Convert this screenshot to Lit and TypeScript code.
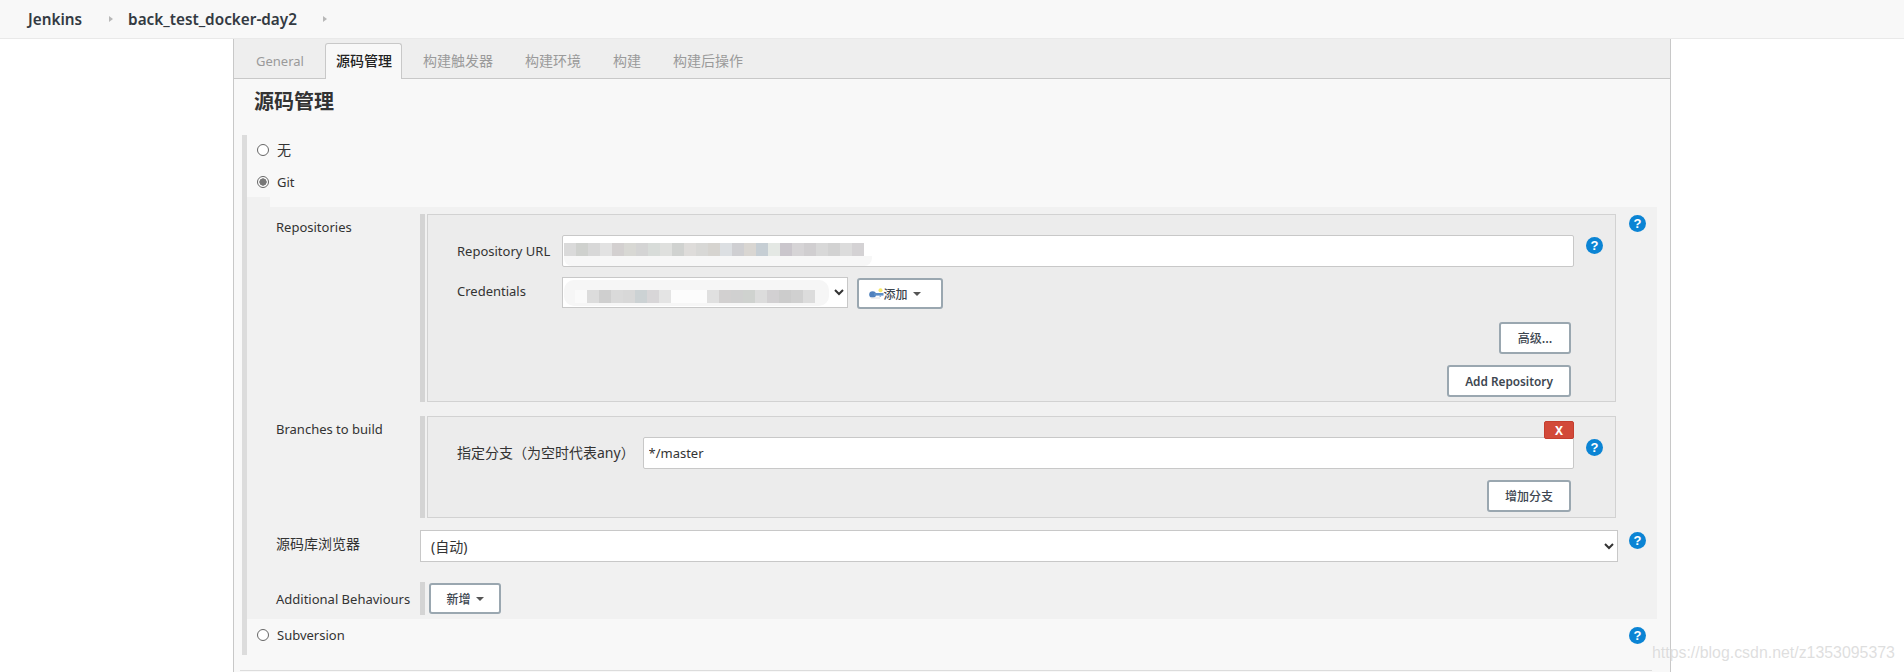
import { LitElement, html, css, svg } from "lit";
import { customElement } from "lit/decorators.js";

const URL_CELLS = ["#dadada","#cfd1ce","#d8d8d8","#e2e2e2","#d3d0d0","#d8d8d4","#d4d4d4","#d8dcd9","#dfe0de","#d0d2d0","#dedcda","#d8d8d6","#d6d4d0","#dcdfe2","#cfcfd2","#d9d6d2","#c6ced4","#e4e8e4","#cac6cc","#d6d4d6","#d0ced0","#d8d8d8","#d2d2d2","#dcdcdc","#d4d2d4"];
const CRED_CELLS = ["#fafafa","#dcdcdc","#cfcfcf","#dadada","#d8d8d8","#ccd2d4","#d8d6d8","#e4e4e4","#fcfcfc","#fcfcfc","#fcfcfc","#e0e0e0","#d2d0d0","#d0d0d0","#cfd2cf","#dcdcdc","#d2d0d2","#cccccc","#d0d0d0","#dcdcdc"];

const help = () => html`<span class="help" title="Help">?</span>`;

const keyIcon = svg`<svg class="key" width="15" height="11" viewBox="0 0 15 11" aria-hidden="true">
  <ellipse cx="3.6" cy="6.5" rx="3.4" ry="3.2" fill="#4f81bd"/>
  <rect x="5" y="5" width="9.5" height="2.6" fill="#5b8ec7"/>
  <rect x="10.5" y="7.4" width="1.6" height="1.4" fill="#7ea6d4"/>
  <rect x="2" y="9.4" width="9" height="1.2" fill="#e4e4e4"/>
  <circle cx="11.5" cy="2.2" r="2" fill="#f6e96a"/>
</svg>`;

@customElement("app-root")
export class AppRoot extends LitElement {
  static styles = css`
    :host {
      display: block;
      position: relative;
      width: 1904px;
      height: 672px;
      overflow: hidden;
      background: #fff;
      color: #333;
      font: 13px/18px "Noto Sans", "Noto Sans CJK SC", sans-serif;
    }
    * { box-sizing: border-box; }
    .bar {
      display: flex;
      align-items: center;
      height: 39px;
      padding: 0 0 1px 28px;
      background: #f8f8f8;
      border-bottom: 1px solid #e9e9e9;
      font-weight: 600;
      font-size: 15.3px;
      color: #333a42;
    }
    .crumb-arrow {
      width: 0;
      height: 0;
      border-left: 4px solid #b8b8b8;
      border-top: 3.5px solid transparent;
      border-bottom: 3.5px solid transparent;
    }
    .arrow-a { margin: 0 15px 0 27px; }
    .arrow-b { margin-left: 26px; }
    .main {
      margin-left: 233px;
      width: 1438px;
      height: 633px;
      background: #f8f8f8;
      border-left: 1px solid #c8c8c8;
      border-right: 1px solid #c8c8c8;
    }
    .tabs {
      display: flex;
      align-items: flex-end;
      height: 40px;
      padding-left: 9px;
      background: #eeeeee;
      border-bottom: 1px solid #c8c8c8;
    }
    .tab {
      height: 36px;
      margin-bottom: -1px;
      padding: 5px 12px 0;
      margin-right: 6px;
      border: 1px solid transparent;
      border-bottom: 0;
      color: #9a9a9a;
      white-space: nowrap;
      font-size: 14px;
      line-height: 24px;
    }
    .tab.active {
      background: #f8f8f8;
      border-color: #c8c8c8;
      border-radius: 3px 3px 0 0;
      color: #222;
      width: 77px;
      padding: 5px 0 0 10.5px;
      margin-right: 8.5px;
      font-weight: 500;
    }
    .tab.general { font-size: 13px; flex: none; width: 81.5px; padding-right: 0; margin-right: 0; }
    h2 {
      margin: 0;
      height: 56px;
      padding: 9px 0 0 20px;
      font-size: 20px;
      line-height: 28px;
      font-weight: 700;
      color: #333;
    }
    .scm {
      margin-left: 8px;
      width: 1415px;
      height: 520px;
      border-left: 5px solid #dcdcdc;
    }
    .radio-row {
      display: flex;
      align-items: center;
      gap: 8px;
      height: 30px;
      padding-left: 10px;
      margin-bottom: 2px;
    }
    .cjk { font-size: 14px; }
    input[type="radio"] {
      appearance: none;
      flex: none;
      width: 12px;
      height: 12px;
      margin: 0;
      border: 1px solid #666;
      border-radius: 50%;
      background: #fff;
    }
    input[type="radio"]:checked {
      background: radial-gradient(circle, #777 0 3.4px, #fff 3.9px);
    }
    .notch { width: 23px; height: 10px; margin-top: -2px; background: #f1f1f1; }
    .git {
      width: 1410px;
      height: 412px;
      padding: 7px 0 0 29px;
      background: #f1f1f1;
    }
    .row {
      display: grid;
      grid-template-columns: 144px 1198px 39px;
    }
    .row-label { padding-top: 4px; white-space: nowrap; }
    .row-help { justify-self: center; }
    .repos { margin-bottom: 14px; }
    .branches { margin-bottom: 12px; }
    .browser { margin-bottom: 20px; align-items: start; }
    .browser .row-label { padding-top: 5px; }
    .browser .row-help { margin-top: 1px; }
    .group {
      display: flex;
      margin-right: 2px;
    }
    .grip { flex: none; width: 5px; margin-right: 2px; background: #d4d4d4; }
    .box {
      position: relative;
      flex: 1;
      border: 1px solid #d2d2d2;
      background: #ececec;
      padding: 20px 0 5px 29px;
    }
    .repo-box { height: 188px; }
    .branch-box { height: 102px; }
    .field {
      display: grid;
      align-items: center;
      grid-template-columns: 104.5px 1012.5px 41px;
    }
    .branch-box .field { grid-template-columns: 185.5px 931.5px 41px; }
    .field-help { justify-self: center; align-self: start; margin-top: 1px; }
    .field label { white-space: nowrap; }
    .text-input {
      position: relative;
      width: 100%;
      height: 32px;
      padding: 0 5px;
      border: 1px solid #c8c8c8;
      border-radius: 2px;
      background: #fff;
      display: flex;
      align-items: center;
      font: inherit;
      color: #333;
    }
    input.text-input { outline: none; }
    .cred-line {
      display: flex;
      align-items: flex-start;
      margin-top: 10px;
    }
    .cred-line label { width: 104.5px; padding-top: 5px; }
    select {
      font: inherit;
      color: #333;
      background: #fff;
      border: 1px solid #c8c8c8;
      border-radius: 0;
      outline: none;
    }
    .cred-select-wrap { position: relative; width: 286px; height: 31px; margin-right: 9px; }
    .cred-select-wrap select { width: 100%; height: 100%; }
    .blur { position: absolute; display: flex; flex-direction: column; pointer-events: none; }
    .blur-row { display: flex; }
    .blur-cell { flex: none; width: 12px; height: 13px; }
    .url-blur { left: 1px; top: 7px; }
    .url-blur .under { width: 308px; height: 10px; background: #f7f7f7; border-radius: 0 0 8px 8px; }
    .cred-blur { left: 2px; top: 3px; width: 265px; height: 26px; background: #f6f6f6; border-radius: 10px; padding: 10px 0 0 11px; overflow: hidden; }
    .btn {
      display: inline-flex;
      align-items: center;
      justify-content: center;
      height: 32px;
      padding: 0 14px;
      border: 2px solid #9aa7b0;
      border-radius: 3px;
      background: #fff;
      color: #3d4650;
      font: 500 12px/16px "Noto Sans CJK SC", "Noto Sans", sans-serif;
      white-space: nowrap;
    }
    .caret {
      display: inline-block;
      width: 0;
      height: 0;
      margin-left: 5px;
      border-left: 4px solid transparent;
      border-right: 4px solid transparent;
      border-top: 4px solid #555;
    }
    .add-btn { width: 86px; height: 31px; margin-top: 1px; padding: 0 0 0 10px; justify-content: flex-start; }
    .key { flex: none; }
    .actions {
      display: flex;
      flex-direction: column;
      align-items: flex-end;
      padding-right: 44px;
    }
    .adv { width: 72px; margin-top: 13px; }
    .add-repo { width: 124px; margin-top: 11px; font: 600 11.8px/16px "Noto Sans", sans-serif; }
    .add-branch { width: 84px; margin-top: 11px; }
    .delete {
      position: absolute;
      top: 4px;
      right: 41px;
      width: 30px;
      height: 18px;
      padding: 0;
      border: 1px solid #c43e2f;
      border-radius: 2px;
      background: #d24939;
      color: #fff;
      font: 700 12px/15px "Noto Sans", sans-serif;
      z-index: 1;
    }
    .browser-select { width: 1198px; height: 32px; padding-left: 6px; border: 1px solid #c8c8c8; font-size: 14px; }
    .behave { align-items: center; }
    .behave .row-label { padding: 0; }
    .behave-group { display: flex; align-items: center; height: 33px; }
    .behave-group .grip { height: 33px; margin-right: 4px; }
    .add-new { width: 72px; height: 31px; padding: 0; }
    .help {
      display: inline-block;
      width: 17px;
      height: 17px;
      border-radius: 50%;
      background: #0b84d4;
      color: #fff;
      text-align: center;
      font: 700 13px/17px "Liberation Sans", sans-serif;
    }
    .svn {
      display: grid;
      grid-template-columns: 1371px 39px;
      width: 1410px;
      height: 32px;
      align-items: center;
    }
    .svn .radio-row { margin: 0; height: 32px; }
    .svn .row-help { justify-self: center; }
    .rule {
      margin: 15px 0 0 6px;
      width: 1412px;
      height: 1px;
      background: #dcdcdc;
    }
    .watermark {
      position: absolute;
      left: 1652px;
      top: 643px;
      font: 15.9px/20px "Liberation Sans", sans-serif;
      color: rgba(190, 190, 190, 0.5);
      text-shadow: 0 0 2px rgba(255, 255, 255, 0.7);
      white-space: nowrap;
    }
  `;

  render() {
    return html`
      <nav class="bar">
        <span>Jenkins</span>
        <i class="crumb-arrow arrow-a"></i>
        <span>back_test_docker-day2</span>
        <i class="crumb-arrow arrow-b"></i>
      </nav>
      <main class="main">
        <div class="tabs">
          <div class="tab general">General</div>
          <div class="tab active">源码管理</div>
          <div class="tab">构建触发器</div>
          <div class="tab">构建环境</div>
          <div class="tab">构建</div>
          <div class="tab">构建后操作</div>
        </div>
        <h2>源码管理</h2>
        <section class="scm">
          <div class="radio-row"><input type="radio" name="scm" /><span class="cjk">无</span></div>
          <div class="radio-row"><input type="radio" name="scm" checked /><span>Git</span></div>
          <div class="notch"></div>
          <div class="git">
            <div class="row repos">
              <div class="row-label">Repositories</div>
              <div class="group">
                <div class="grip"></div>
                <div class="box repo-box">
                  <div class="field">
                    <label>Repository URL</label>
                    <div class="text-input">
                      <div class="blur url-blur">
                        <div class="blur-row">
                          ${URL_CELLS.map((c) => html`<span class="blur-cell" style="background:${c}"></span>`)}
                        </div>
                        <div class="under"></div>
                      </div>
                    </div>
                    <span class="field-help">${help()}</span>
                  </div>
                  <div class="cred-line">
                    <label>Credentials</label>
                    <div class="cred-select-wrap">
                      <select><option></option></select>
                      <div class="blur cred-blur">
                        <div class="blur-row">
                          ${CRED_CELLS.map((c) => html`<span class="blur-cell" style="background:${c}"></span>`)}
                        </div>
                      </div>
                    </div>
                    <button class="btn add-btn">${keyIcon}添加<i class="caret"></i></button>
                  </div>
                  <div class="actions">
                    <button class="btn adv">高级...</button>
                    <button class="btn add-repo">Add Repository</button>
                  </div>
                </div>
              </div>
              <div class="row-help">${help()}</div>
            </div>
            <div class="row branches">
              <div class="row-label">Branches to build</div>
              <div class="group">
                <div class="grip"></div>
                <div class="box branch-box">
                  <button class="delete">X</button>
                  <div class="field">
                    <label class="cjk">指定分支（为空时代表any）</label>
                    <input class="text-input" value="*/master" />
                    <span class="field-help">${help()}</span>
                  </div>
                  <div class="actions">
                    <button class="btn add-branch">增加分支</button>
                  </div>
                </div>
              </div>
            </div>
            <div class="row browser">
              <div class="row-label cjk">源码库浏览器</div>
              <select class="browser-select"><option>(自动)</option></select>
              <div class="row-help">${help()}</div>
            </div>
            <div class="row behave">
              <div class="row-label">Additional Behaviours</div>
              <div class="behave-group">
                <div class="grip"></div>
                <button class="btn add-new">新增<i class="caret"></i></button>
              </div>
            </div>
          </div>
          <div class="svn">
            <div class="radio-row"><input type="radio" name="scm" /><span>Subversion</span></div>
            <div class="row-help">${help()}</div>
          </div>
        </section>
        <div class="rule"></div>
      </main>
      <div class="watermark">https://blog.csdn.net/z1353095373</div>
    `;
  }
}
